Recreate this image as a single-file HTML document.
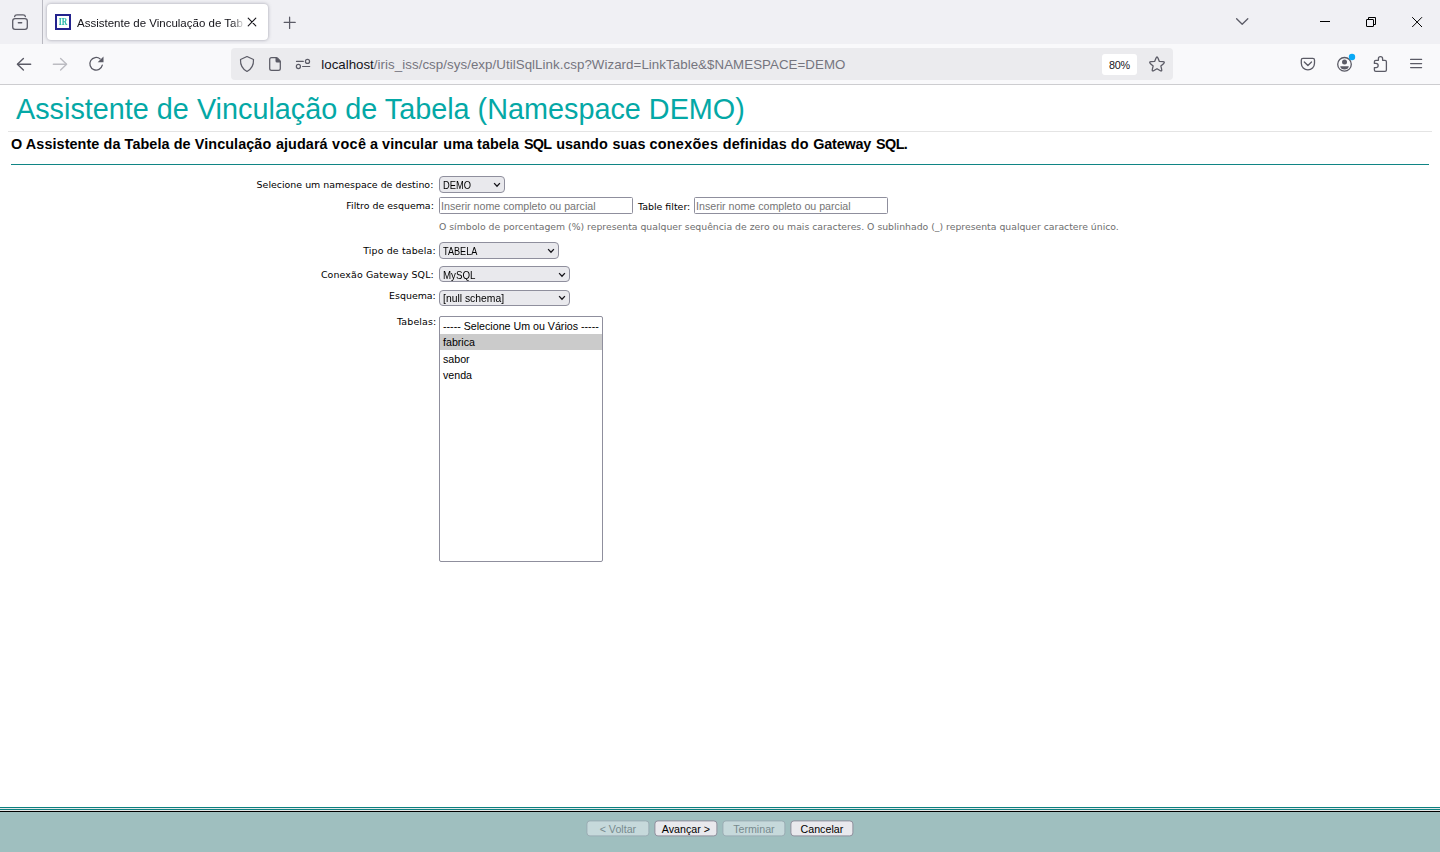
<!DOCTYPE html>
<html lang="pt-BR">
<head>
<meta charset="utf-8">
<title>Assistente de Vinculação de Tabela</title>
<style>
*{box-sizing:border-box;margin:0;padding:0}
html,body{width:1440px;height:852px;overflow:hidden;background:#fff}
body{position:relative;font-family:"Liberation Sans",sans-serif;color:#000}
.abs{position:absolute}
svg{position:absolute;overflow:visible}
/* ---------- browser chrome ---------- */
#tabbar{left:0;top:0;width:1440px;height:44px;background:#f0f0f4}
#vsep{left:42px;top:0;width:1px;height:44px;background:#b9b9c1}
#tab{left:47px;top:4px;width:221px;height:36px;background:#fff;border-radius:4px;box-shadow:0 0 3.5px rgba(75,75,95,.5)}
#fav{left:55px;top:14px;width:16px;height:16px;border:2px solid #23238e;background:#fff}
#fav span{position:absolute;left:-1px;top:0;width:14px;text-align:center;font:bold 9.4px/12px "Liberation Serif",serif;color:#1fb4a6;transform:scaleX(.82)}
#tabtitle{left:77px;top:14px;width:166px;height:18px;overflow:hidden;white-space:nowrap;font-size:11.5px;line-height:18px;color:#15141a;-webkit-mask-image:linear-gradient(to right,#000 155px,transparent 168px);mask-image:linear-gradient(to right,#000 155px,transparent 168px)}
#navbar{left:0;top:44px;width:1440px;height:40px;background:#f9f9fb}
#navline{left:0;top:84px;width:1440px;height:1px;background:#cdcdd0}
#urlbar{left:231px;top:48px;width:942px;height:32px;background:#ebebee;border-radius:4px}
#url{left:321.3px;top:56px;height:18px;white-space:nowrap;font-size:13.3px;line-height:18px;color:#75757e;letter-spacing:.06px}
#url b{font-weight:normal;color:#15141a;letter-spacing:0}
#zoom{left:1102px;top:54px;width:35px;height:21px;background:#fff;border-radius:3px;font-size:10.8px;line-height:23px;letter-spacing:-.25px;text-align:center;color:#15141a}
/* ---------- page ---------- */
#title{left:16px;top:91px;white-space:nowrap;font-size:28.8px;line-height:36px;color:#04a8a6}
#tline{left:8px;top:131px;width:1424px;height:1px;background:#e4e4e4}
#sub{left:11px;top:135px;white-space:nowrap;font-weight:bold;font-size:14.4px;line-height:18px;color:#000;letter-spacing:.085px}
#sline{left:11px;top:164px;width:1418px;height:1px;background:#108585}
.lbl{right:1007px;white-space:nowrap;font-family:"DejaVu Sans","Liberation Sans",sans-serif;font-size:9.43px;line-height:12px;color:#000;text-align:right}
.ctl{background:#e9e9ed;border:1px solid #8f8f9d;border-radius:4px;font-size:10.67px;line-height:14px;color:#000;white-space:nowrap;padding-left:2.5px}
.sx{display:inline-block;transform-origin:0 50%}
.inp{background:#fff;border:1px solid #8f8f9d;border-radius:1.5px;font-size:10.67px;line-height:14px;color:#757575;white-space:nowrap;padding-left:1px}
.hint{left:439px;top:221px;white-space:nowrap;font-family:"DejaVu Sans","Liberation Sans",sans-serif;font-size:9.31px;line-height:12px;color:#6e6e6e}
#list{left:439px;top:316px;width:164px;height:246px;background:#fff;border:1px solid #8f8f9d;border-radius:2px}
#list div{position:absolute;left:0;width:162px;height:16px;padding-left:3px;font-size:10.67px;line-height:16px;white-space:nowrap}
/* ---------- footer ---------- */
#foot{left:0;top:812px;width:1440px;height:40px;background:#9fbfbf}
.btn{top:820px;height:16px;transform:translate(.4px,.4px);background:#e9e9ed;border:1px solid #8f8f9d;border-radius:3.5px;font-size:10.67px;line-height:16px;text-align:center;color:#000;white-space:nowrap}
.btn.dis{background:#c6d9db;border-color:#9aacb3;color:#778a8e}
</style>
</head>
<body>
<!-- ======= Firefox chrome ======= -->
<div id="tabbar" class="abs"></div>
<div id="vsep" class="abs"></div>
<div id="tab" class="abs"></div>
<div id="fav" class="abs"><span>IR</span></div>
<div id="tabtitle" class="abs">Assistente de Vinculação de Tabela (Namespace DEMO)</div>
<div id="navbar" class="abs"></div>
<div id="navline" class="abs"></div>
<div id="urlbar" class="abs"></div>
<div id="url" class="abs"><b>localhost</b>/iris_iss/csp/sys/exp/UtilSqlLink.csp?Wizard=LinkTable&amp;$NAMESPACE=DEMO</div>
<div id="zoom" class="abs">80%</div>

<svg id="icons" style="left:0;top:0" width="1440" height="85" viewBox="0 0 1440 85" fill="none" stroke="#5b5b66" stroke-width="1.3" stroke-linecap="round" stroke-linejoin="round">
  <!-- firefox view -->
  <path d="M14.6 16.6 Q14.8 14.8 17 14.8 H23 Q25.2 14.8 25.4 16.6"/>
  <rect x="12.7" y="18.6" width="14.6" height="10.7" rx="2.4"/>
  <path d="M18.4 22.8 H21.6" stroke-width="1.5"/>
  <!-- tab close -->
  <path d="M248.2 18.2 L255.8 25.8 M255.8 18.2 L248.2 25.8" stroke="#15141a" stroke-width="1.1"/>
  <!-- new tab -->
  <path d="M284.2 22.4 H295.2 M289.6 17.2 V28.4" stroke-width="1.25"/>
  <!-- list all tabs -->
  <path d="M1236.6 18.7 L1242.2 24.3 L1247.8 18.7"/>
  <!-- window controls -->
  <g stroke="#000" stroke-width="1" stroke-linecap="butt" stroke-linejoin="miter">
    <path d="M1320 21.5 H1330"/>
    <rect x="1366.5" y="19.5" width="7" height="7" rx=".3"/>
    <path d="M1368.5 19 V17.5 H1375.5 V24.5 H1374"/>
    <path d="M1412.2 17.2 L1422 27 M1422 17.2 L1412.2 27"/>
  </g>
  <!-- back -->
  <path d="M30.6 64.25 H17.8" stroke-width="1.5"/><path d="M23.4 58.5 L17.4 64.2 L23.4 69.9" stroke-width="1.4"/>
  <!-- forward (disabled) -->
  <path d="M53.4 64.25 H66.2" stroke="#bcbcc2" stroke-width="1.5"/><path d="M60.6 58.5 L66.6 64.2 L60.6 69.9" stroke="#bcbcc2" stroke-width="1.4"/>
  <!-- reload -->
  <path d="M100.2 58.9 A6.3 6.3 0 1 0 102.3 65.2"/>
  <path d="M103.5 56.5 V62.3 H97.7 Z" fill="#5b5b66" stroke="none"/>
  <!-- shield -->
  <path d="M247 56.5 L253.5 59.5 C253.7 63.6 252.7 68.4 247 71.5 C241.3 68.4 240.3 63.6 240.5 59.5 Z" stroke-width="1.2"/>
  <!-- page -->
  <path d="M271.6 57.7 H276.2 Q277 57.7 277.6 58.3 L279.7 60.4 Q280.3 61 280.3 61.8 V68.4 Q280.3 70.3 278.4 70.3 H271.6 Q269.7 70.3 269.7 68.4 V59.6 Q269.7 57.7 271.6 57.7 Z" stroke-width="1.25"/>
  <path d="M275.5 57.4 H276.6 L280.6 61.4 V62.5 H277 Q275.5 62.5 275.5 61 Z" fill="#5b5b66" stroke="none"/>
  <!-- permissions -->
  <g stroke-width="1.2">
    <path d="M296.5 61.4 H303.3 M302.6 66.5 H309.7"/>
    <circle cx="307.5" cy="61.4" r="2.05"/>
    <circle cx="298.4" cy="66.5" r="2.05"/>
  </g>
  <!-- star -->
  <path d="M1155.96 58.15 C1156.61 56.61 1157.39 56.61 1158.04 58.15 L1159.38 61.38 L1162.87 61.66 C1164.54 61.80 1164.78 62.55 1163.51 63.64 L1160.85 65.91 L1161.66 69.31 C1162.05 70.94 1161.41 71.41 1159.99 70.53 L1157.00 68.71 L1154.01 70.53 C1152.59 71.41 1151.95 70.94 1152.34 69.31 L1153.15 65.91 L1150.49 63.64 C1149.22 62.55 1149.46 61.80 1151.13 61.66 L1154.62 61.38 Z" stroke-width="1.3"/>
  <!-- pocket -->
  <path d="M1303 58.4 H1312.8 Q1314.5 58.4 1314.5 60.1 V63.3 A6.6 6.6 0 0 1 1301.3 63.3 V60.1 Q1301.3 58.4 1303 58.4 Z"/>
  <path d="M1304.3 62 L1307.9 65.5 L1311.5 62"/>
  <!-- account -->
  <circle cx="1344.5" cy="64.3" r="6.8"/>
  <circle cx="1344.5" cy="61.9" r="2.5" fill="#5b5b66" stroke="none"/>
  <path d="M1340.2 66.2 H1348.8 Q1348.2 69.4 1344.5 69.4 Q1340.8 69.4 1340.2 66.2 Z" fill="#5b5b66" stroke="none"/>
  <circle cx="1352" cy="57" r="3.2" fill="#0aa9f6" stroke="none"/>
  <!-- extensions -->
  <path d="M1378.4 60.3 V58.7 A2.1 2.1 0 0 1 1382.6 58.7 V60.3 H1385 Q1386.4 60.3 1386.4 61.7 V70 Q1386.4 71.4 1385 71.4 H1375.8 Q1374.4 71.4 1374.4 70 V67.7 H1376 A2.15 2.15 0 0 0 1376 63.4 H1374.4 V61.7 Q1374.4 60.3 1375.8 60.3 Z"/>
  <!-- menu -->
  <path d="M1410.6 59.4 H1421.6 M1410.6 63.5 H1421.6 M1410.6 67.6 H1421.6" stroke-width="1.25"/>
</svg>


<!-- ======= page ======= -->
<div id="title" class="abs">Assistente de Vinculação de Tabela (Namespace DEMO)</div>
<div id="tline" class="abs"></div>
<div id="sub" class="abs">O Assistente da Tabela de Vinculação <span style="margin-left:0.50px">ajudará</span> <span style="margin-left:0.25px;letter-spacing:.38px">você</span> <span style="margin-left:-0.45px">a</span> <span style="margin-left:-0.15px">vincular</span> <span style="margin-left:1.25px">uma</span> <span style="margin-left:-0.25px">tabela</span> <span style="margin-left:0.75px;letter-spacing:-.7px">SQL</span> <span style="margin-left:0.6px">usando</span> <span style="margin-left:0.50px">suas</span> <span style="margin-left:-0.25px;letter-spacing:.3px">conexões</span> <span style="margin-left:0.55px">definidas</span> <span style="margin-left:0.00px">do</span> <span style="margin-left:0.50px;letter-spacing:-.19px">Gateway</span> <span style="margin-left:0.9px;letter-spacing:-.6px">SQL.</span></div>
<div id="sline" class="abs"></div>

<div class="abs lbl" style="right:1006.7px;top:179px">Selecione um namespace de destino:</div>
<div class="abs ctl" style="left:439px;top:176px;width:66px;height:17px;padding-top:1px"><span class="sx" style="transform:scaleX(.875)">DEMO</span></div>
<div class="abs lbl" style="right:1006.2px;top:200px">Filtro de esquema:</div>
<div class="abs inp" style="left:439px;top:197px;width:194px;height:17px;padding-top:1px">Inserir nome completo ou parcial</div>
<div class="abs lbl" style="left:638px;right:auto;top:201px">Table filter:</div>
<div class="abs inp" style="left:694px;top:197px;width:194px;height:17px;padding-top:1px">Inserir nome completo ou parcial</div>
<div class="abs hint">O símbolo de porcentagem (%) representa qualquer sequência de zero ou mais caracteres. O sublinhado (_) representa qualquer caractere único.</div>
<div class="abs lbl" style="right:1004.2px;top:245px;letter-spacing:.15px">Tipo de tabela:</div>
<div class="abs ctl" style="left:439px;top:242px;width:120px;height:17px;padding-top:1px"><span class="sx" style="transform:scaleX(.856)">TABELA</span></div>
<div class="abs lbl" style="right:1006.2px;top:269px;letter-spacing:.12px">Conexão Gateway SQL:</div>
<div class="abs ctl" style="left:439px;top:266px;width:131px;height:16px;padding-top:1px"><span class="sx" style="transform:scaleX(.913)">MySQL</span></div>
<div class="abs lbl" style="right:1004.2px;top:290px">Esquema:</div>
<div class="abs ctl" style="left:439px;top:290px;width:131px;height:16px"><span class="sx" style="transform:scaleX(.973)">[null schema]</span></div>
<div class="abs lbl" style="right:1003.7px;top:316px;letter-spacing:.13px">Tabelas:</div>
<div id="list" class="abs">
  <div style="top:1px">----- Selecione Um ou Vários -----</div>
  <div style="top:17px;background:#cbcbcb">fabrica</div>
  <div style="top:34px">sabor</div>
  <div style="top:50px">venda</div>
</div>
<svg style="left:493px;top:181.8px" width="8" height="6" viewBox="0 0 8 6"><path d="M1.1 1.1 L4 4.2 L6.9 1.1" fill="none" stroke="#15141a" stroke-width="1.3"/></svg>
<svg style="left:547px;top:247.7px" width="8" height="6" viewBox="0 0 8 6"><path d="M1.1 1.1 L4 4.2 L6.9 1.1" fill="none" stroke="#15141a" stroke-width="1.3"/></svg>
<svg style="left:558px;top:271.7px" width="8" height="6" viewBox="0 0 8 6"><path d="M1.1 1.1 L4 4.2 L6.9 1.1" fill="none" stroke="#15141a" stroke-width="1.3"/></svg>
<svg style="left:558px;top:295px" width="8" height="6" viewBox="0 0 8 6"><path d="M1.1 1.1 L4 4.2 L6.9 1.1" fill="none" stroke="#15141a" stroke-width="1.3"/></svg>

<!-- ======= footer ======= -->

<div class="abs" style="left:0;top:807px;width:1440px;height:5px;background:#e6e6e6"></div>
<div class="abs" style="left:0;top:807px;width:1440px;height:1px;background:#0b8080"></div>
<div class="abs" style="left:0;top:809px;width:1440px;height:1px;background:#0b8080"></div>
<div class="abs" style="left:0;top:811px;width:1440px;height:1px;background:#000"></div>
<div id="foot" class="abs"></div>
<div class="abs btn dis" style="left:586px;width:63px">&lt; Voltar</div>
<div class="abs btn" style="left:654px;width:63px">Avançar &gt;</div>
<div class="abs btn dis" style="left:722px;width:63px">Terminar</div>
<div class="abs btn" style="left:790px;width:63px">Cancelar</div>

</body>
</html>
